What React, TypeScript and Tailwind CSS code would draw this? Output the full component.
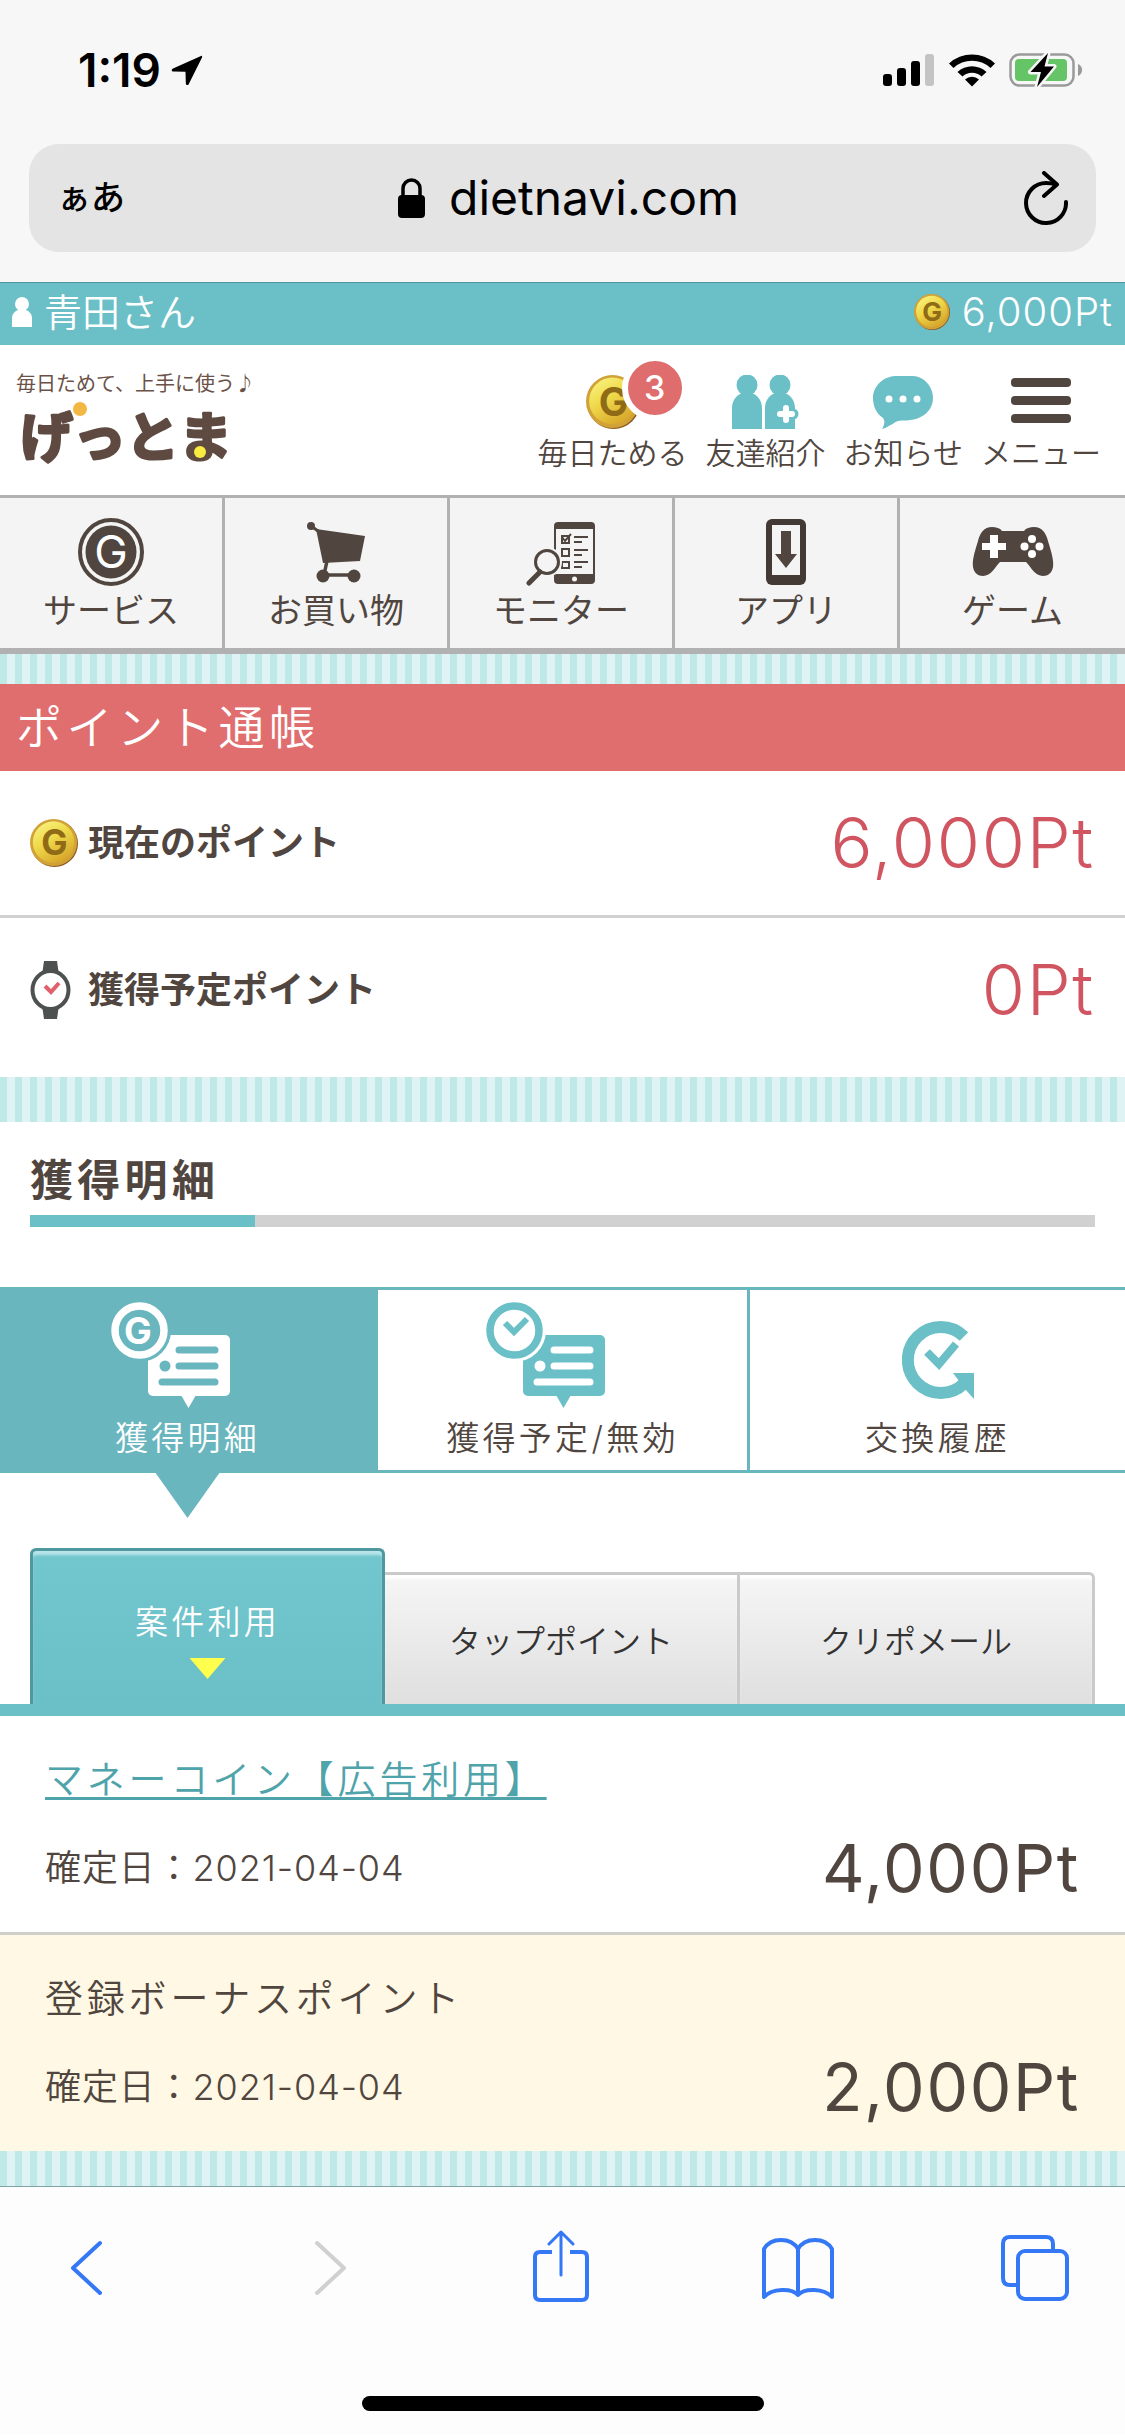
import { useId, useState } from "react";
import type { ReactNode } from "react";

function Coin({ className }: { className: string }) {
  const id = useId();
  return (
    <svg viewBox="0 0 52 52" className={className} aria-hidden="true">
      <defs>
        <linearGradient id={id} x1="0" y1="0" x2="0.6" y2="1">
          <stop offset="0" stopColor="#fbf68a" />
          <stop offset="0.5" stopColor="#efd94a" />
          <stop offset="1" stopColor="#d9a82c" />
        </linearGradient>
      </defs>
      <circle cx="26.500" cy="26.500" r="25.500" fill="#8f5a1c" />
      <circle cx="25.500" cy="25.500" r="25.500" fill="#d0a238" />
      <circle cx="25.500" cy="25" r="22.500" fill={`url(#${id})`} />
      <text x="26.500" y="39" textAnchor="middle" fontSize="38" className="font-bold" fill="#8f6a17">
        G
      </text>
    </svg>
  );
}

function Stripes({ className }: { className: string }) {
  return (
    <div
      className={`bg-[repeating-linear-gradient(90deg,#bfe9e7_0px,#bfe9e7_7px,#dff3f4_7px,#dff3f4_15px)] ${className}`}
    />
  );
}

function StatusBar() {
  return (
    <div className="flex items-center justify-between pt-11 pb-12 pl-[78px] pr-[42px]">
      <div className="flex items-center gap-2.5 text-[46px] leading-[52px] font-semibold">
        1:19
        <svg viewBox="0 0 32 30" className="h-[30px] w-8" aria-hidden="true">
          <path
            d="M30 1 2 13.500c-2 1-1.500 3 .5 3l12 .3.3 11.500c0 2.200 2.200 2.500 3 .6L31 2.500c.5-1.200-.2-2-1-1.500z"
            fill="#000"
          />
        </svg>
      </div>
      <div className="flex items-center gap-3.5">
        <svg viewBox="0 0 52 34" className="h-[34px] w-[52px]" aria-hidden="true">
          <rect x="0" y="21" width="9" height="12" rx="3" />
          <rect x="14" y="15" width="9" height="18" rx="3" />
          <rect x="28" y="8" width="9" height="25" rx="3" />
          <rect x="42" y="1" width="9" height="32" rx="3" fill="#c4c4c4" />
        </svg>
        <svg viewBox="0 0 46 34" className="h-[34px] w-[46px]" aria-hidden="true">
          <path d="M0 10.500a34 34 0 0 1 46 0l-4.500 4.500a27 27 0 0 0-37 0z" />
          <path d="M8.500 19a21 21 0 0 1 29 0l-5 4.500a14 14 0 0 0-19 0z" />
          <path d="M16 26.500a10.500 10.500 0 0 1 14 0l-7 7z" />
        </svg>
        <svg viewBox="0 0 74 36" className="h-9 w-[74px]" aria-hidden="true">
          <rect x="1.500" y="2.500" width="63" height="31" rx="9" fill="none" stroke="#9a9a9a" strokeWidth="2.500" />
          <rect x="6" y="7" width="52" height="22" rx="4" fill="#65c466" />
          <path d="M69 12c5.500 2 5.500 10 0 12z" fill="#9a9a9a" />
          <path d="M39 1 21.500 20H32l-4 15 17-20.500H35.500z" stroke="#f7f7f7" strokeWidth="5" strokeLinejoin="round" />
          <path d="M39 1 21.500 20H32l-4 15 17-20.500H35.500z" />
        </svg>
      </div>
    </div>
  );
}

function AddressBar() {
  return (
    <div className="px-[29px] pb-[30px]">
      <div className="grid grid-cols-[1fr_auto_1fr] items-center rounded-[30px] bg-[#e4e4e4] px-7 py-6">
        <button type="button" className="justify-self-start text-[34px] leading-[60px] font-medium">
          ぁあ
        </button>
        <div className="flex items-center gap-6 pl-3">
          <svg viewBox="0 0 27 40" className="h-10 w-[27px]" aria-hidden="true">
            <rect x="0" y="17" width="27" height="23" rx="4" />
            <path d="M5 19v-8.500a8.500 8.500 0 0 1 17 0V19" fill="none" stroke="#000" strokeWidth="3.500" />
          </svg>
          <span className="text-[48px] leading-[60px]">dietnavi.com</span>
        </div>
        <button type="button" aria-label="再読み込み" className="justify-self-end">
          <svg viewBox="0 0 46 54" className="h-[54px] w-[46px]" fill="none" stroke="#000" strokeWidth="4" strokeLinecap="round" strokeLinejoin="round">
            <path d="M34 13.500c-3-1-6-1.500-10-1.500A20 20 0 1 0 44 31" />
            <path d="M22 2 35 13.500 22 25" />
          </svg>
        </button>
      </div>
    </div>
  );
}

function Logo() {
  return (
    <svg viewBox="0 0 244 100" className="h-[100px] w-[244px]" role="img" aria-label="げっとま">
      <text x="0" y="22" fontSize="20" fill="#6b5147" className="font-normal">
        毎日ためて、上手に使う♪
      </text>
      <circle cx="64" cy="40" r="7" fill="#f3b744" />
      <text x="4" y="88" fontSize="53" fill="#5f4a41" stroke="#5f4a41" strokeWidth="3" strokeLinejoin="round" className="font-bold">
        げっとま
      </text>
      <circle cx="184" cy="83" r="6" fill="#f7ec3f" />
    </svg>
  );
}

const menuItems: { label: string; badge?: string; icon: ReactNode }[] = [
  { label: "毎日ためる", badge: "3", icon: <Coin className="h-[54px] w-[54px]" /> },
  {
    label: "友達紹介",
    icon: (
      <svg viewBox="0 0 68 54" className="h-[54px] w-[68px]" fill="#6bbfc7" aria-hidden="true">
        <circle cx="15" cy="10" r="10.500" />
        <path d="M0 54V33c0-8 5-13 10-15q5 4 10 0c5 2 10 7 10 15v21z" />
        <circle cx="48" cy="10" r="10.500" />
        <path d="M33 54V33c0-8 5-13 10-15q5 4 10 0c5 2 10 7 10 15v21z" />
        <circle cx="61" cy="39" r="5.500" />
        <path d="M54 33v12M48 39h12" stroke="#fff" strokeWidth="6" strokeLinecap="round" />
      </svg>
    ),
  },
  {
    label: "お知らせ",
    icon: (
      <svg viewBox="0 0 60 54" className="h-[54px] w-[60px]" aria-hidden="true">
        <path d="M22 1h18c13 1 20 12 20 22 0 12-10 21-23 22-4 1-7 0-12 1-5 2-9 6-16 8 3-5 3-8 1-11C4 39 0 32 0 23 0 12 9 2 22 1z" fill="#6bbfc7" />
        <circle cx="16" cy="24" r="3.500" fill="#fff" />
        <circle cx="30" cy="24" r="3.500" fill="#fff" />
        <circle cx="44" cy="24" r="3.500" fill="#fff" />
      </svg>
    ),
  },
  {
    label: "メニュー",
    icon: (
      <svg viewBox="0 0 60 54" className="h-[54px] w-[60px]" fill="#50463f" aria-hidden="true">
        <rect y="3" width="60" height="9" rx="4" />
        <rect y="21" width="60" height="9" rx="4" />
        <rect y="39" width="60" height="9" rx="4" />
      </svg>
    ),
  },
];

const categories: { label: string; icon: ReactNode }[] = [
  {
    label: "サービス",
    icon: (
      <svg viewBox="0 0 66 68" className="h-[68px] w-[66px]" aria-hidden="true">
        <ellipse cx="33" cy="34" rx="31" ry="32" fill="#f4f4f4" stroke="#50463f" strokeWidth="4" />
        <ellipse cx="33" cy="34" rx="25.500" ry="26.500" fill="#50463f" />
        <text x="33" y="50" textAnchor="middle" fontSize="45" fill="#fff" className="font-normal">
          G
        </text>
      </svg>
    ),
  },
  {
    label: "お買い物",
    icon: (
      <svg viewBox="0 0 58 68" className="h-[68px] w-[58px]" fill="#50463f" aria-hidden="true">
        <circle cx="4" cy="8" r="4" />
        <path d="m4 8 7 5" stroke="#50463f" strokeWidth="3" />
        <path d="m9 11 49 7-5 25-37 2z" />
        <path d="m20 43-3 14h30" stroke="#50463f" strokeWidth="3.500" fill="none" />
        <circle cx="16" cy="58" r="6.500" />
        <circle cx="47" cy="58" r="6.500" />
      </svg>
    ),
  },
  {
    label: "モニター",
    icon: (
      <svg viewBox="0 0 76 68" className="h-[68px] w-[76px]" fill="none" stroke="#50463f" aria-hidden="true">
        <rect x="31" y="4" width="41" height="62" rx="4" fill="#50463f" stroke="none" />
        <path d="M33 11h37v45H33z" fill="#f4f4f4" stroke="none" />
        <circle cx="51.500" cy="61" r="2.500" fill="#f4f4f4" stroke="none" />
        <path d="M39 18h7v7h-7zM39 31h7v7h-7zM39 44h7v6h-7z" strokeWidth="2" />
        <path d="m39 19 3 4 6-7M51 19h14M51 24h8M51 32h14M51 37h8M51 44h14M51 49h8" strokeWidth="2" />
        <circle cx="24" cy="44" r="15" fill="#f4f4f4" stroke="none" />
        <path d="M17 54 5 67" strokeWidth="9" stroke="#f4f4f4" />
        <circle cx="24" cy="44" r="11.500" strokeWidth="3" />
        <path d="M17 54 6 65" strokeWidth="5" strokeLinecap="round" />
      </svg>
    ),
  },
  {
    label: "アプリ",
    icon: (
      <svg viewBox="0 0 40 68" className="h-[68px] w-10" aria-hidden="true">
        <rect x="0" y="1" width="40" height="66" rx="6" fill="#443a35" />
        <rect x="6" y="7" width="28" height="50" fill="#f4f4f4" />
        <path d="M15 13h10v23h6L20 50 9 36h6z" fill="#50463f" />
      </svg>
    ),
  },
  {
    label: "ゲーム",
    icon: (
      <svg viewBox="0 0 82 68" className="h-[68px] w-[82px]" aria-hidden="true">
        <path
          d="M20 9c4 0 8 1 10 4h22c2-3 6-4 10-4 8 0 12 6 14 14 3 10 6 19 5 26-1 6-5 9-10 9-8 0-12-9-17-14H28c-5 5-9 14-17 14-5 0-9-3-10-9-1-7 2-16 5-26C8 15 12 9 20 9z"
          fill="#50463f"
        />
        <path d="M18 17h8v8h8v7h-8v8h-8v-8h-8v-7h8z" fill="#fff" />
        <circle cx="60" cy="21" r="4" fill="#fff" />
        <circle cx="60" cy="36" r="4" fill="#fff" />
        <circle cx="52.500" cy="28.500" r="4" fill="#fff" />
        <circle cx="67.500" cy="28.500" r="4" fill="#fff" />
      </svg>
    ),
  },
];

// speech balloon with list lines, shared by the first two tabs
function Balloon({ fg, bg, children }: { fg: string; bg: string; children: ReactNode }) {
  return (
    <svg viewBox="0 0 154 106" className="h-[106px] w-[154px]" aria-hidden="true">
      <rect x="37" y="33" width="82" height="61" rx="5" fill={fg} />
      <path d="M70 93h15l-7.500 13z" fill={fg} />
      <path d="M68 48h36M68 64h36M51 80h53" stroke={bg} strokeWidth="7" strokeLinecap="round" />
      <circle cx="54" cy="64" r="5.500" fill={bg} />
      <circle cx="28.500" cy="28.500" r="31.500" fill={bg} />
      {children}
    </svg>
  );
}

const historyTabs: { label: string; icon: ReactNode }[] = [
  {
    label: "獲得明細",
    icon: (
      <Balloon fg="#fff" bg="#6ab6be">
        <circle cx="28.500" cy="28.500" r="24.500" fill="none" stroke="#fff" strokeWidth="7.500" />
        <text x="28.500" y="42" textAnchor="middle" fontSize="37" fill="#fff" className="font-bold">
          G
        </text>
      </Balloon>
    ),
  },
  {
    label: "獲得予定/無効",
    icon: (
      <Balloon fg="#6bbfc7" bg="#fff">
        <circle cx="28.500" cy="28.500" r="24.500" fill="none" stroke="#6bbfc7" strokeWidth="7.500" />
        <path d="m19 21 9 9 13-13" fill="none" stroke="#6bbfc7" strokeWidth="6" />
      </Balloon>
    ),
  },
  {
    label: "交換履歴",
    icon: (
      <svg viewBox="0 0 72 106" className="h-[106px] w-[72px]" aria-hidden="true">
        <path d="M62 34.500A33 33 0 1 0 62 81.500" fill="none" stroke="#6bbfc7" strokeWidth="12" />
        <path d="M51 71h21v26l-9-10z" fill="#6bbfc7" />
        <path d="m25 50 12 12 17-20" fill="none" stroke="#6bbfc7" strokeWidth="8" />
      </svg>
    ),
  },
];

const subTabs = ["案件利用", "タップポイント", "クリポメール"];

function PointRow({ icon, label, value }: { icon: ReactNode; label: string; value: string }) {
  return (
    <div className="flex items-center justify-between px-[30px]">
      <dt className="flex items-center gap-2.5 text-[36px] leading-[54px] font-bold">
        {icon}
        {label}
      </dt>
      <dd className="text-[70px] leading-[84px] tracking-wide text-[#d05560]">{value}</dd>
    </div>
  );
}

function Entry({ title, date, value }: { title: ReactNode; date: string; value: string }) {
  return (
    <div className="px-[45px] pt-9 pb-[22px]">
      <p className="text-[38px] leading-[54px] tracking-widest">{title}</p>
      <div className="flex items-center justify-between pt-5">
        <p className="text-[36px] leading-[84px] tracking-wide">確定日：{date}</p>
        <p className="text-[66px] leading-[84px] font-normal tracking-wide">{value}</p>
      </div>
    </div>
  );
}

function ToolbarButton({ label, children }: { label: string; children: ReactNode }) {
  return (
    <button type="button" aria-label={label}>
      <svg
        viewBox="0 0 72 72"
        className="h-[72px] w-[72px]"
        fill="none"
        stroke="currentColor"
        strokeWidth="4"
        strokeLinecap="round"
        strokeLinejoin="round"
      >
        {children}
      </svg>
    </button>
  );
}

function Toolbar() {
  return (
    <nav className="border-t border-[#7fa3a4] bg-[#fdfdfd]">
      <div className="flex items-center justify-between pt-[43px] pl-[50px] pr-[54px] text-[#3478f6]">
        <ToolbarButton label="戻る">
          <path d="M50 13 23 38l27 25" />
        </ToolbarButton>
        <ToolbarButton label="進む">
          <path d="m30 13 27 25-27 25" stroke="#d1cfd0" />
        </ToolbarButton>
        <ToolbarButton label="共有">
          <path d="M27 22H15q-5 0-5 5v38q0 5 5 5h42q5 0 5-5V27q0-5-5-5H45" strokeLinecap="butt" />
          <path d="M36 45V3M24 14 36 2l12 12" strokeWidth="3" />
        </ToolbarButton>
        <ToolbarButton label="ブックマーク">
          <path d="M36 19v46C30 58 10 58 2 67V19c7-12 27-12 34 0 7-12 27-12 34 0v48c-8-9-28-9-34-2" />
        </ToolbarButton>
        <ToolbarButton label="タブ">
          <path d="M19 55h-8q-7 0-7-7V14q0-7 7-7h36q7 0 7 7v6" strokeLinecap="butt" />
          <rect x="19" y="21" width="49" height="48" rx="7" />
        </ToolbarButton>
      </div>
      <div className="flex justify-center pt-[94px] pb-6">
        <div className="h-[15px] w-[402px] rounded-full bg-black" />
      </div>
    </nav>
  );
}

export default function App() {
  const [tab, setTab] = useState(0);
  const [subTab, setSubTab] = useState(0);

  return (
    <div className="bg-white font-['Inter','Noto_Sans_CJK_JP',sans-serif] font-[350] text-[#50463f]">
      <div className="bg-[#f7f7f7] font-normal text-black">
        <StatusBar />
        <AddressBar />
      </div>

      <div className="flex items-center justify-between border-t border-[#4f959c] bg-[#6bbfc7] px-3 pt-0.5 pb-1.5 text-white">
        <div className="flex items-center gap-3 text-[38px] leading-[54px]">
          <svg viewBox="0 0 20 30" className="h-[30px] w-5" fill="#fff" aria-hidden="true">
            <circle cx="10" cy="7" r="7" />
            <path d="M0 30V21c0-4 3-7 6-8h8c3 1 6 4 6 8v9z" />
          </svg>
          青田さん
        </div>
        <div className="flex items-center gap-3 text-[40px] leading-[54px] font-light tracking-wide">
          <Coin className="h-9 w-9" />
          6,000Pt
        </div>
      </div>

      <header className="flex items-start justify-between pt-6 pb-2 pl-4 pr-6">
        <a href="#">
          <Logo />
        </a>
        <nav className="flex gap-[18px] pt-1.5">
          {menuItems.map((m) => (
            <a key={m.label} href="#" className="flex flex-col items-center pb-2.5 text-[30px] leading-[48px]">
              <span className="relative">
                {m.icon}
                {m.badge ? (
                  <span className="absolute -top-5 left-9 flex h-[66px] w-[66px] items-center justify-center rounded-full border-[6px] border-white bg-[#df6d6d] text-[34px] font-medium text-white">
                    {m.badge}
                  </span>
                ) : null}
              </span>
              {m.label}
            </a>
          ))}
        </nav>
      </header>

      <nav className="grid grid-cols-5 divide-x-3 divide-[#b1b1b1] border-t-3 border-b-6 border-[#b1b1b1] bg-[#f4f4f4] font-normal">
        {categories.map((c) => (
          <a key={c.label} href="#" className="flex flex-col items-center pt-5 pb-3 text-[34px] leading-[50px]">
            {c.icon}
            {c.label}
          </a>
        ))}
      </nav>
      <Stripes className="h-[30px]" />

      <h1 className="bg-[#e06e6e] px-4 py-3 text-[46px] leading-[63px] tracking-widest text-white">
        ポイント通帳
      </h1>
      <dl className="divide-y-3 divide-[#d1d1d1]">
        <div className="py-[30px]">
          <PointRow icon={<Coin className="h-12 w-12" />} label="現在のポイント" value="6,000Pt" />
        </div>
        <div className="pt-[30px] pb-[45px]">
          <PointRow
            icon={
              <svg viewBox="0 0 48 60" className="h-[60px] w-12" aria-hidden="true">
                <path d="M14 1h13l2 14H12zM12 45h17l-2 14H14z" fill="#4d5150" />
                <ellipse cx="20.500" cy="30" rx="18" ry="19" fill="#fff" stroke="#4d5150" strokeWidth="4" />
                <path d="m15 26 6 6 8-9" fill="none" stroke="#e0606c" strokeWidth="4" />
              </svg>
            }
            label="獲得予定ポイント"
            value="0Pt"
          />
        </div>
      </dl>
      <Stripes className="h-[45px]" />

      <h2 className="mx-[30px] pt-7 pb-[5px] text-[43px] leading-[60px] font-bold tracking-widest">獲得明細</h2>
      <div className="mx-[30px] mb-[60px] h-3 bg-[#d1d1d1]">
        <div className="h-3 w-[225px] bg-[#6bbfc7]" />
      </div>

      <div className="grid grid-cols-3 border-y-3 border-[#6ab6be]">
        {historyTabs.map((t, i) => (
          <button
            key={t.label}
            type="button"
            onClick={() => setTab(i)}
            className={`relative flex flex-col items-center pt-3 pb-0.5 text-[33px] leading-[60px] tracking-widest ${
              i === 1 ? "border-x-3 border-[#6ab6be]" : ""
            } ${i === tab ? "bg-[#6ab6be] text-white" : ""}`}
          >
            {t.icon}
            {t.label}
            {i === tab ? (
              <span className="absolute top-full left-1/2 h-12 w-[68px] -translate-x-1/2 bg-[#6ab6be] [clip-path:polygon(0_0,100%_0,50%_100%)]" />
            ) : null}
          </button>
        ))}
      </div>

      <div className="mt-[75px] grid grid-cols-3 items-end px-[30px]">
        {subTabs.map((s, i) =>
          i === subTab ? (
            <button
              key={s}
              type="button"
              className="flex h-39 flex-col items-center rounded-t-md border-x-3 border-t-3 border-[#4f989f] bg-linear-to-b from-[#72c6ce] to-[#6bbfc7] pt-[43px] text-[33px] leading-[56px] tracking-widest text-white shadow-[inset_0_5px_3px_-1px_#b9e6ea]"
            >
              {s}
              <span className="mt-2 h-[21px] w-9 bg-[#ffff4d] [clip-path:polygon(0_0,100%_0,50%_100%)]" />
            </button>
          ) : (
            <button
              key={s}
              type="button"
              onClick={() => setSubTab(i)}
              className="h-33 border-t-3 border-r-3 border-[#cacaca] bg-linear-to-b from-[#f6f6f6] to-[#dfdfdf] pt-1 text-[32px] leading-[48px] text-[#333] shadow-[inset_0_5px_3px_-1px_#ffffff] last:rounded-tr-md"
            >
              {s}
            </button>
          ),
        )}
      </div>
      <div className="h-3 bg-[#6bbfc7]" />

      <ul>
        <li>
          <Entry
            title={
              <a href="#" className="text-[#4fa3aa] underline decoration-3 underline-offset-4">
                マネーコイン【広告利用】
              </a>
            }
            date="2021-04-04"
            value="4,000Pt"
          />
        </li>
        <li className="border-t-3 border-[#cfcfca] bg-[#fff8e4]">
          <Entry title="登録ボーナスポイント" date="2021-04-04" value="2,000Pt" />
        </li>
      </ul>
      <Stripes className="h-[35px]" />
      <Toolbar />
    </div>
  );
}
